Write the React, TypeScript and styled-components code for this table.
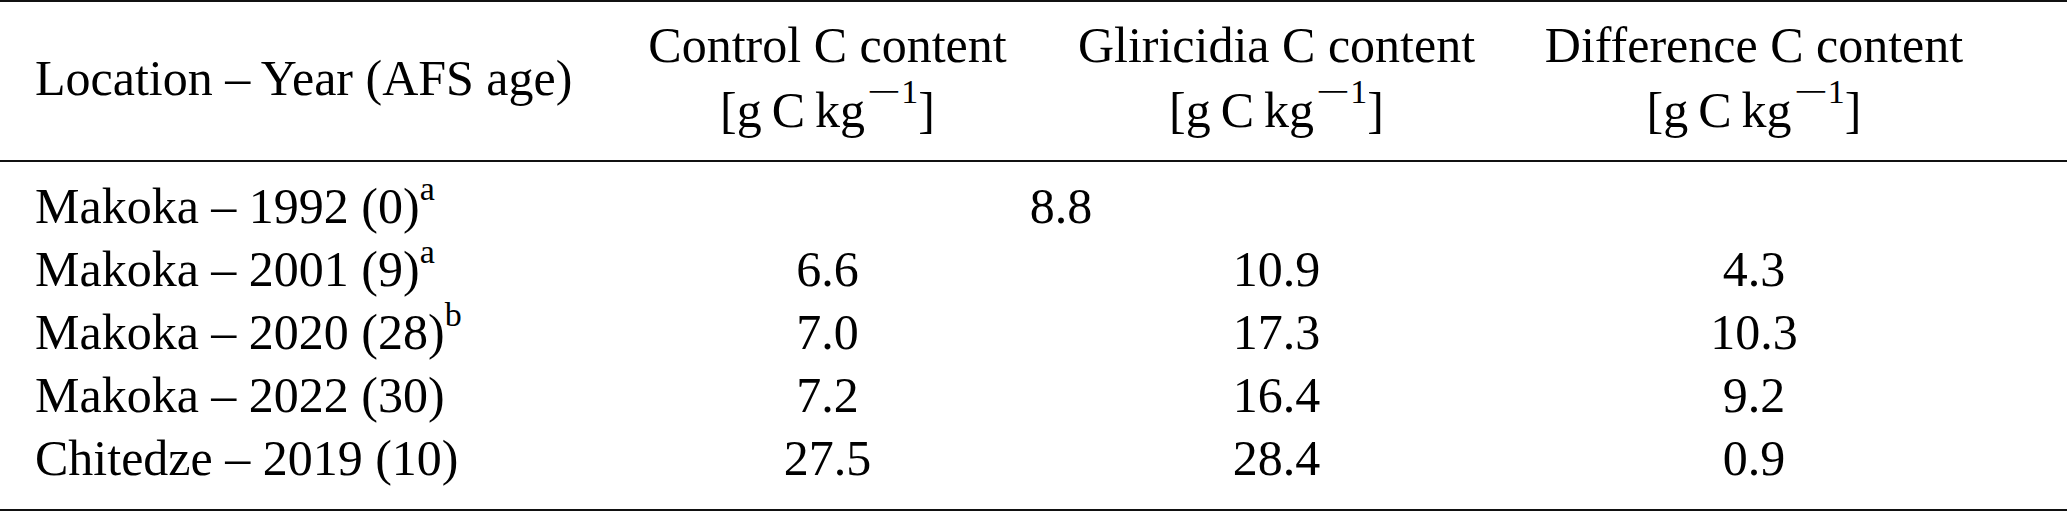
import React from 'react';
import styled, { createGlobalStyle } from 'styled-components';

const GlobalStyle = createGlobalStyle`
  html, body { margin: 0; padding: 0; background: #ffffff; }
  body {
    font-family: "Liberation Serif", "Times New Roman", Times, serif;
    color: #000000;
  }
`;

const Table = styled.div`
  width: 2067px;
  border-top: 2px solid #111111;
  border-bottom: 2px solid #111111;
  font-size: 50px;
`;

const Grid = styled.div`
  display: grid;
  grid-template-columns: 612px 431px 467px 488px 1fr;
`;

const Head = styled(Grid)`
  padding: 11px 0 17px;
  border-bottom: 2px solid #111111;
  line-height: 65px;
  align-items: center;
`;

const Body = styled.div`
  padding: 13px 0 19px;
  line-height: 63px;
`;

const Cell = styled.div<{ $align?: 'left' | 'center'; $span?: number }>`
  text-align: ${(p) => p.$align ?? 'center'};
  padding-left: ${(p) => (p.$align === 'left' ? '35px' : '0')};
  grid-column: span ${(p) => p.$span ?? 1};
  white-space: nowrap;
`;

const Line = styled.div`
  display: block;
`;

const Sup = styled.sup<{ $raise?: number }>`
  font-size: 34px;
  line-height: 0;
  vertical-align: ${(p) => p.$raise ?? 23}px;
`;

const Minus = styled.span`
  display: inline-block;
  transform: scaleX(1.8);
  margin: 0 8px 0 9px;
`;

const Unit: React.FC = () => (
  <Line>
    [g{'\u2009'}C{'\u2009'}kg
    <Sup $raise={24}>
      <Minus>−</Minus>1
    </Sup>
    ]
  </Line>
);

type DataRow = {
  label: string;
  note?: string;
  values: string[];
};

const rows: DataRow[] = [
  { label: 'Makoka – 1992 (0)', note: 'a', values: ['8.8'] },
  { label: 'Makoka – 2001 (9)', note: 'a', values: ['6.6', '10.9', '4.3'] },
  { label: 'Makoka – 2020 (28)', note: 'b', values: ['7.0', '17.3', '10.3'] },
  { label: 'Makoka – 2022 (30)', values: ['7.2', '16.4', '9.2'] },
  { label: 'Chitedze – 2019 (10)', values: ['27.5', '28.4', '0.9'] },
];

const headers = ['Control C content', 'Gliricidia C content', 'Difference C content'];

export default function App() {
  return (
    <>
      <GlobalStyle />
      <Table>
        <Head>
          <Cell $align="left">Location – Year (AFS age)</Cell>
          {headers.map((h) => (
            <Cell key={h}>
              <Line>{h}</Line>
              <Unit />
            </Cell>
          ))}
        </Head>
        <Body>
          {rows.map((r) => (
            <Grid key={r.label}>
              <Cell $align="left">
                {r.label}
                {r.note && <Sup>{r.note}</Sup>}
              </Cell>
              {r.values.length === 1 ? (
                <Cell $span={2}>{r.values[0]}</Cell>
              ) : (
                r.values.map((v, i) => <Cell key={i}>{v}</Cell>)
              )}
            </Grid>
          ))}
        </Body>
      </Table>
    </>
  );
}
